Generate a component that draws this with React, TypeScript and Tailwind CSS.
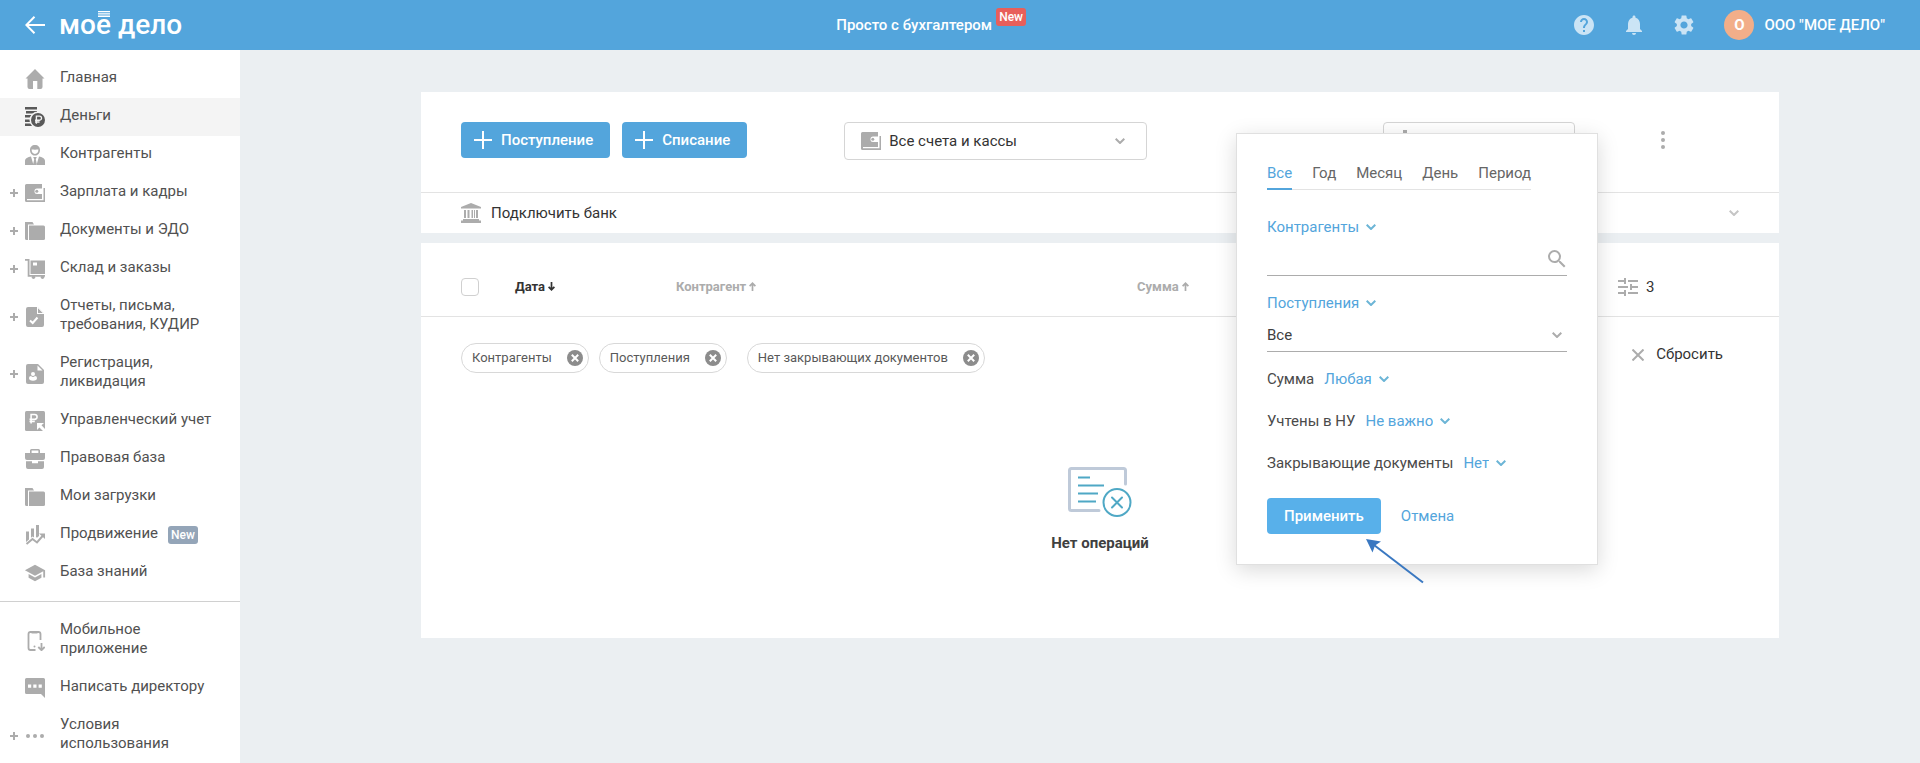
import type { ReactNode } from "react";
import { MdHelp, MdNotifications, MdSettings, MdSearch, MdSchool } from "react-icons/md";

const Icon = ({ children, className = "text-[#acacac]" }: { children: ReactNode; className?: string }) => (
  <svg viewBox="0 0 20 20" fill="currentColor" className={`size-5 shrink-0 ${className}`} aria-hidden="true">
    {children}
  </svg>
);

const Chevron = ({ className = "text-[#acacac]" }: { className?: string }) => (
  <svg viewBox="0 0 10 6" fill="none" stroke="currentColor" strokeWidth="2" className={`h-[6px] w-[10px] shrink-0 ${className}`} aria-hidden="true">
    <path d="M.7.7 5 5 9.3.7" />
  </svg>
);

const Ruble = ({ className = "", transform = "" }: { className?: string; transform?: string }) => (
  <path
    d="M2 9.5V1h3.4a2.3 2.3 0 0 1 0 4.6H.5M.5 7.6h5"
    fill="none"
    strokeWidth="1.5"
    className={className}
    transform={transform}
  />
);

const HomeIcon = () => (
  <Icon>
    <path d="M10 0 .5 9.6h2V18a2 2 0 0 0 2 2H8v-8h4.300v8h3.200a2 2 0 0 0 2-2V9.600h2z" />
  </Icon>
);

const MoneyIcon = () => (
  <Icon className="text-[#595959]">
    <path d="M0 0h12v2.500H0zM1 4h11v2.500H1zM0 8h12v2.500H0zM0 12.500h10V15H0zM0 16.500h10V19H0z" />
    <circle cx="13" cy="13" r="8.500" className="fill-[#f4f4f4]" />
    <circle cx="13" cy="13" r="7" />
    <Ruble className="stroke-[#f4f4f4]" transform="translate(9.600 8.200) scale(.9)" />
  </Icon>
);

const PersonIcon = () => (
  <Icon>
    <path fillRule="evenodd" d="M10 0c3 0 5 2 5 5s-2 5.600-5 5.600S5 8 5 5s2-5 5-5zM6.600 4.600C6.600 7.500 8 9 10 9s3.400-1.500 3.400-4.400c-2 .2-4.800.2-6.800 0z" />
    <path d="M0 20v-4c0-2.500 3-4 6-4.500L8.500 20zM20 20v-4c0-2.500-3-4-6-4.500L11.500 20zM8.200 12h3.600l-1 2.200L12 20H8l1.200-5.800z" />
  </Icon>
);

const WalletIcon = () => (
  <Icon>
    <path d="M0 2.500Q0 1 1.500 1H17v4.500h-5A2.500 2.500 0 0 0 9.500 8v.5A2.500 2.500 0 0 0 12 11h5v5H2v1.200h16.500V5H20v14H1.500Q0 19 0 17.500z" />
    <circle cx="11.800" cy="8.200" r="1.500" />
  </Icon>
);

const FolderIcon = () => (
  <Icon>
    <path d="M0 1h7.500l1.500 2.500H3V19H1.500Q0 19 0 17.500z" />
    <path d="M4 4.500H18.500Q20 4.500 20 6v11.500q0 1.500-1.500 1.500H4z" />
  </Icon>
);

const CartIcon = () => (
  <Icon>
    <path d="M0 0h4.500v16H20v1.800H2.700V1.800H0z" />
    <path fillRule="evenodd" d="M5.500 1.500H20V15H5.500zm2.500 2v3h4v-3z" />
    <circle cx="8.500" cy="18.300" r="1.700" />
    <circle cx="17.500" cy="18.300" r="1.700" />
  </Icon>
);

const DocCheckIcon = () => (
  <Icon>
    <path d="M3 0h9v7h7v11q0 2-2 2H3q-2 0-2-2V2q0-2 2-2z" />
    <path d="m13 .5 5.500 5.500H13z" />
    <path d="m12.300 0 6.700 6.700" className="stroke-white" />
    <path d="m5 13.500 2.700 2.500 4.800-5.500" fill="none" strokeWidth="2" className="stroke-white" />
  </Icon>
);

const DocPersonIcon = () => (
  <Icon>
    <path d="M3 0h10l6 6v12q0 2-2 2H3q-2 0-2-2V2q0-2 2-2z" />
    <path d="m12.500 1.500 5 5h-5z" className="fill-white" />
    <circle cx="8" cy="10" r="2" className="fill-white" />
    <path d="M4 14q0-2 2-2 2 1.800 4 0 2 0 2 2 0 2.700-4 2.700T4 14z" className="fill-white" />
  </Icon>
);

const AccountingIcon = () => (
  <Icon>
    <rect width="20" height="20" rx="1.500" />
    <Ruble className="stroke-white" transform="translate(4 2.500) scale(1.050)" />
    <path d="M12 12h7l-2.500 2.300L20 18v2h-2l-3.600-3.600L12 19z" className="fill-white" />
  </Icon>
);

const BriefcaseIcon = () => (
  <Icon>
    <path fillRule="evenodd" d="M5 4V1.500Q5 0 6.500 0h7Q15 0 15 1.500V4h5v5q0 2-2 2H2q-2 0-2-2V4zm1.600 0h6.800V1.600H6.600z" />
    <path d="M1 12.300h6v2h6v-2h6V18q0 2-2 2H3q-2 0-2-2z" />
  </Icon>
);

const GrowthIcon = () => (
  <Icon>
    <path d="M1 6.500h3v8l-3 2.500zM6 3.500h3v9l-1.500-1L6 12.800zM11 0h3v11l-2 1.800-1-.8z" />
    <path d="m1.500 19 6-5 4.500 3.500L18 10.500" fill="none" stroke="currentColor" strokeWidth="2" />
    <path d="M14 8.500h6V14z" />
  </Icon>
);

const PhoneIcon = () => (
  <Icon>
    <path d="M15.500 9V3q0-2-2-2h-8q-2 0-2 2v14q0 2 2 2h5" fill="none" stroke="currentColor" strokeWidth="1.800" />
    <path d="M6.500 1h6v1.500h-6z" />
    <circle cx="9.500" cy="15.500" r="1" />
    <path d="M16.500 12v7M13.300 16l3.200 3.200 3.200-3.200" fill="none" stroke="currentColor" strokeWidth="1.800" />
  </Icon>
);

const MessageIcon = () => (
  <Icon>
    <path d="M1.500 0h17Q20 0 20 1.500V20l-4-4H1.500Q0 16 0 14.500v-13Q0 0 1.500 0z" />
    <path d="M3 6.500h3.200v3.200H3zM8.300 6.500h3.200v3.200H8.300zM13.600 6.500h3.200v3.200h-3.200z" className="fill-white" />
  </Icon>
);

const DotsIcon = () => (
  <Icon>
    <circle cx="3" cy="10" r="2" />
    <circle cx="10" cy="10" r="2" />
    <circle cx="17" cy="10" r="2" />
  </Icon>
);

const BankIcon = () => (
  <Icon>
    <path d="M10 0 0 4v1.500h20V4zM3 7h2v8H3zM6.500 7h2v8h-2zM10.500 7h1.500v8h-1.500zM13 7h1v8h-1zM15 7h2v8h-2zM2 16h16v1.500h2V20H0v-2.500h2z" />
  </Icon>
);

const TuneIcon = () => (
  <Icon>
    <path d="M0 3h6V1h2v6H6V5H0zM10 3h10v2H10zM0 9h10v2H0zM12 7h2v2h6v2h-6v2h-2zM0 15h6v-2h2v6H6v-2H0zM10 15h10v2H10z" />
  </Icon>
);

const PlusIcon = () => (
  <svg viewBox="0 0 18 18" stroke="currentColor" strokeWidth="2" className="size-[18px]" aria-hidden="true">
    <path d="M9 0v18M0 9h18" />
  </svg>
);

const SortArrow = ({ up = false }: { up?: boolean }) => (
  <svg viewBox="0 0 7 9" fill="none" stroke="currentColor" strokeWidth="1.700" className={up ? "h-[9px] w-[7px]" : "h-[9px] w-[7px] rotate-180"} aria-hidden="true">
    <path d="M3.500 9V1.200M.6 4.200l2.900-2.900 2.900 2.900" />
  </svg>
);

type MenuItem = { title: string; icon: ReactNode; active?: boolean; nested?: boolean; badge?: string };

const mainMenu: MenuItem[] = [
  { title: "Главная", icon: <HomeIcon /> },
  { title: "Деньги", icon: <MoneyIcon />, active: true },
  { title: "Контрагенты", icon: <PersonIcon /> },
  { title: "Зарплата и кадры", icon: <WalletIcon />, nested: true },
  { title: "Документы и ЭДО", icon: <FolderIcon />, nested: true },
  { title: "Склад и заказы", icon: <CartIcon />, nested: true },
  { title: "Отчеты, письма, требования, КУДИР", icon: <DocCheckIcon />, nested: true },
  { title: "Регистрация, ликвидация", icon: <DocPersonIcon />, nested: true },
  { title: "Управленческий учет", icon: <AccountingIcon /> },
  { title: "Правовая база", icon: <BriefcaseIcon /> },
  { title: "Мои загрузки", icon: <FolderIcon /> },
  { title: "Продвижение", icon: <GrowthIcon />, badge: "New" },
  { title: "База знаний", icon: <MdSchool className="-mx-px size-[22px] shrink-0 text-[#acacac]" /> },
];

const extraMenu: MenuItem[] = [
  { title: "Мобильное приложение", icon: <PhoneIcon /> },
  { title: "Написать директору", icon: <MessageIcon /> },
  { title: "Условия использования", icon: <DotsIcon />, nested: true },
];

const Menu = ({ items }: { items: MenuItem[] }) => (
  <ul>
    {items.map((item) => (
      <li key={item.title}>
        <a
          href="#"
          className={`flex items-center pr-5 pl-[10px] leading-[19px] text-[#515151] ${item.active ? "bg-[#f4f4f4]" : ""}`}
        >
          <span className="w-[15px] shrink-0">
            {item.nested && (
              <svg viewBox="0 0 8 8" strokeWidth="2" className="size-2 stroke-[#acacac]" aria-hidden="true">
                <path d="M4 0v8M0 4h8" />
              </svg>
            )}
          </span>
          {item.icon}
          <span className="ml-[15px] pt-2 pb-[11px]">{item.title}</span>
          {item.badge && (
            <span className="ml-[10px] w-[30px] rounded-[3px] bg-[#94a5b8] text-center text-xs leading-[18px] font-medium text-white">{item.badge}</span>
          )}
        </a>
      </li>
    ))}
  </ul>
);

const Header = () => (
  <header className="flex h-[50px] items-center bg-[#53a5dc] pr-[35px] pl-[25px] text-white">
    <a href="#" className="flex w-[265px] items-center gap-[14px]" aria-label="Моё дело">
      <svg viewBox="0 0 20 18" fill="none" stroke="currentColor" strokeWidth="2" className="h-[18px] w-5" aria-hidden="true">
        <path d="M20 9H1.500M9.500.8 1.300 9l8.200 8.200" />
      </svg>
      <span className="text-[28px] leading-[30px] font-medium">
        мо
        <span className="relative">
          е
          <svg viewBox="0 0 12 6" className="absolute top-[3px] left-[2px] h-[6px] w-3 fill-white" aria-hidden="true">
            <path d="M0 0h12v1.300H0zM0 2.300h12v1.300H0zM0 4.600h12v1.300H0z" />
          </svg>
        </span>{" "}
        дело
      </span>
    </a>
    <a href="#" className="mx-auto flex items-center gap-1 font-medium">
      Просто с бухгалтером
      <span className="mb-4 w-[30px] rounded-[3px] bg-[#e85f5b] text-center text-xs leading-[18px] font-medium">New</span>
    </a>
    <div className="flex items-center gap-[26px] text-[#cbe4f5]">
      <button aria-label="Помощь"><MdHelp className="size-6" /></button>
      <button aria-label="Уведомления"><MdNotifications className="size-6" /></button>
      <button aria-label="Настройки"><MdSettings className="size-6" /></button>
      <a href="#" className="ml-0.5 flex items-center gap-[10px] font-medium text-white">
        <span className="flex size-[30px] items-center justify-center rounded-full bg-[#f2ae89] font-bold">О</span>
        ООО "МОЕ ДЕЛО"
      </a>
    </div>
  </header>
);

const Toolbar = () => (
  <section className="bg-white">
    <div className="flex h-[101px] items-start border-b border-[#e3e3e3] pt-[30px] pr-[106px] pl-10">
      <div className="flex gap-3">
        {["Поступление", "Списание"].map((title) => (
          <button key={title} className="flex h-9 items-center gap-[9px] rounded bg-[#53a5dc] pr-[17px] pl-[13px] font-medium text-white">
            <PlusIcon />
            {title}
          </button>
        ))}
      </div>
      <div className="relative ml-[97px] w-[303px]">
        <select aria-label="Счета и кассы" className="h-[38px] w-full appearance-none rounded border border-[#d5d5d5] bg-white pr-10 pl-11 text-[#333]">
          <option>Все счета и кассы</option>
        </select>
        <span className="pointer-events-none absolute inset-0 flex items-center justify-between pr-[22px] pl-[17px]">
          <WalletIcon />
          <Chevron />
        </span>
      </div>
      <button aria-label="Скачать" className="ml-auto flex h-[38px] w-[192px] items-start rounded border border-[#d5d5d5] pt-[7px] pl-[11px]">
        <Icon>
          <path d="M8 0h4v7h4l-6 6-6-6h4zM1 16h18v3H1z" />
        </Icon>
      </button>
      <button aria-label="Ещё" className="ml-[78px] flex h-9 items-center">
        <span className="rotate-90"><DotsIcon /></span>
      </button>
    </div>
    <button className="flex h-10 w-full items-center gap-[10px] pr-10 pl-10 text-[#333]">
      <BankIcon />
      Подключить банк
      <Chevron className="ml-auto text-[#c5c5c5]" />
    </button>
  </section>
);

const filters = ["Контрагенты", "Поступления", "Нет закрывающих документов"];

const Operations = () => (
  <section className="mt-[10px] bg-white pb-[85px]">
    <table className="w-full table-fixed text-left text-[13px] text-[#acacac]">
      <thead>
        <tr className="h-[73px] border-b border-[#e3e3e3]">
          <th className="w-[94px] pt-[15px] pl-10">
            <input type="checkbox" aria-label="Выбрать все" className="block size-[18px] appearance-none rounded-[4px] border border-[#d0d0d0] bg-white" />
          </th>
          <th className="w-[161px] pt-[15px]">
            <button className="flex items-center gap-[3px] font-bold text-[#333]">Дата <SortArrow /></button>
          </th>
          <th className="w-[461px] pt-[15px]">
            <button className="flex items-center gap-[3px] font-bold">Контрагент <SortArrow up /></button>
          </th>
          <th className="pt-[15px]">
            <button className="flex items-center gap-[3px] font-bold">Сумма <SortArrow up /></button>
          </th>
          <th className="w-[161px] pt-[15px]">
            <button aria-label="Фильтры" className="flex items-center gap-2 text-[15px] font-normal text-[#333]"><TuneIcon />3</button>
          </th>
        </tr>
      </thead>
    </table>
    <div className="flex items-start justify-between pt-[26px] pr-14 pl-10">
      <div className="flex flex-wrap gap-[10px]">
        {filters.map((title) => (
          <span key={title} className="flex h-[30px] items-center gap-[15px] rounded-full border border-[#d8d8d8] pr-[5px] pl-[10px] text-[13px] text-[#595959] last:ml-[10px]">
            {title}
            <button aria-label={`Убрать: ${title}`}>
              <svg viewBox="0 0 16 16" className="size-4" aria-hidden="true">
                <circle cx="8" cy="8" r="8" className="fill-[#8c8c8c]" />
                <path d="m4.800 4.800 6.400 6.400m0-6.400-6.400 6.400" strokeWidth="2" className="stroke-white" />
              </svg>
            </button>
          </span>
        ))}
      </div>
      <button className="flex h-6 items-center gap-3 text-[#333]">
        <svg viewBox="0 0 12 12" strokeWidth="2" className="size-3 stroke-[#acacac]" aria-hidden="true">
          <path d="m.5.5 11 11m0-11-11 11" />
        </svg>
        Сбросить
      </button>
    </div>
    <div className="flex flex-col items-center gap-4 pt-[94px]">
      <svg viewBox="0 0 64 50" fill="none" className="h-[50px] w-16" aria-hidden="true">
        <path d="M31 43.500H3.500q-2 0-2-2v-38q0-2 2-2h52q2 0 2 2V17" strokeWidth="3" strokeLinecap="round" className="stroke-[#bfcad9]" />
        <path d="M10 10.500h12M10 18.500h26M10 26.500h20M10 34.500h18" strokeWidth="2" className="stroke-[#4fa8c5]" />
        <circle cx="49" cy="35.500" r="13.500" strokeWidth="2" className="stroke-[#4fa8c5]" />
        <path d="m44 30.500 10 10m0-10-10 10" strokeWidth="2" strokeLinecap="round" className="stroke-[#4fa8c5]" />
      </svg>
      <p className="leading-5 font-bold text-[#404040]">Нет операций</p>
    </div>
  </section>
);

const tabs = ["Все", "Год", "Месяц", "День", "Период"];

const conditions = [
  { id: "sum", label: "Сумма", value: "Любая" },
  { id: "tax", label: "Учтены в НУ", value: "Не важно" },
  { id: "closing", label: "Закрывающие документы", value: "Нет" },
];

const FilterPopup = () => (
  <div className="absolute top-[41px] right-[181px] w-[362px] border border-[#e0e0e0] bg-white px-[30px] pt-[29px] pb-[30px] leading-5 shadow-[0_5px_20px_rgba(0,0,0,0.15)]">
    <div className="flex w-fit gap-5 border-b border-[#e3e3e3]" role="tablist">
      {tabs.map((tab, index) => (
        <button
          key={tab}
          role="tab"
          aria-selected={index === 0}
          className={index === 0 ? "-mb-px border-b-2 border-[#53a5dc] pb-[5px] text-[#53a5dc]" : "pb-[6px] text-[#666]"}
        >
          {tab}
        </button>
      ))}
    </div>

    <button className="mt-[27px] flex items-center gap-[7px] text-[#53a5dc]">
      Контрагенты <Chevron className="text-[#6cb5d6]" />
    </button>
    <div className="relative mt-[5px]">
      <input type="text" aria-label="Контрагенты" className="block h-[34px] w-full border-b border-[#acacac] pr-8 outline-none" />
      <MdSearch className="pointer-events-none absolute top-[5px] -right-[2px] size-6 text-[#acacac]" />
    </div>

    <button className="mt-[17px] flex items-center gap-[7px] text-[#53a5dc]">
      Поступления <Chevron className="text-[#6cb5d6]" />
    </button>
    <div className="relative mt-[5px]">
      <select aria-label="Поступления" className="block h-[34px] w-full appearance-none border-b border-[#acacac] text-[#404040]">
        <option>Все</option>
      </select>
      <span className="pointer-events-none absolute inset-y-0 right-[5px] flex items-center"><Chevron /></span>
    </div>

    <div className="mt-[17px] flex flex-col gap-[22px]">
      {conditions.map(({ id, label, value }) => (
        <div key={id} className="flex items-center gap-[10px] text-[#4a4a4a]">
          <label htmlFor={id}>{label}</label>
          <div className="relative">
            <select id={id} className="block h-5 appearance-none pr-[17px] text-[#53a5dc]">
              <option>{value}</option>
            </select>
            <span className="pointer-events-none absolute inset-y-0 right-0 flex items-center"><Chevron className="text-[#6cb5d6]" /></span>
          </div>
        </div>
      ))}
    </div>

    <div className="mt-[25px] flex items-center gap-5">
      <button className="h-9 rounded bg-[#58b0ea] px-[17px] font-medium text-white">Применить</button>
      <button className="text-[#53a5dc]">Отмена</button>
    </div>

    {/* pointer to the submit button */}
    <svg viewBox="0 0 58 45" className="absolute top-[405px] left-[129px] h-[45px] w-[58px] text-[#3a78c1]" aria-hidden="true">
      <path d="M8 6 57 43.500" stroke="currentColor" strokeWidth="2" />
      <path d="m0 0 15 2.500-6 4L6.500 13.500z" fill="currentColor" />
    </svg>
  </div>
);

const App = () => {
  return (
    <div className="flex min-h-screen flex-col bg-[#ebeff2] font-[Roboto,sans-serif] text-[15px]">
      <Header />
      <div className="flex flex-1">
        <aside className="w-60 shrink-0 bg-white pt-[10px]">
          <nav>
            <Menu items={mainMenu} />
            <hr className="mt-[9px] mb-[10px] border-[#d0d0d0]" />
            <Menu items={extraMenu} />
          </nav>
        </aside>
        <main className="flex-1 pt-[42px] pl-10">
          <div className="relative mx-auto max-w-[1358px]">
            <Toolbar />
            <Operations />
            <FilterPopup />
          </div>
        </main>
      </div>
    </div>
  );
};

export default App;
